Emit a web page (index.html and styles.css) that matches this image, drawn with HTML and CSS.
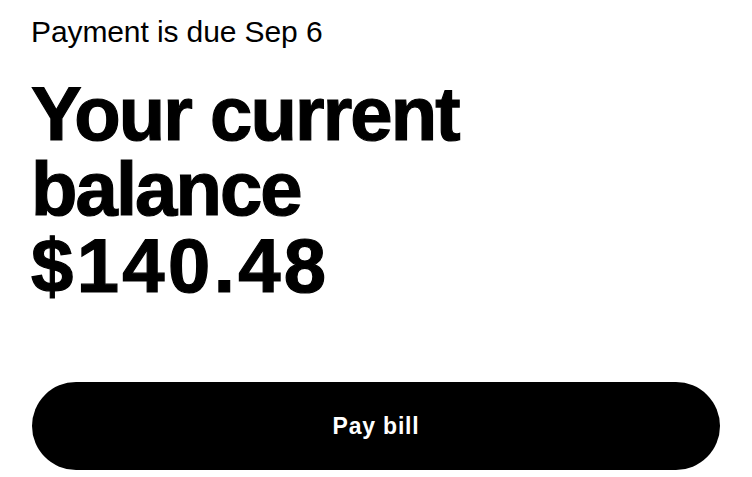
FILE: index.html
```html
<!DOCTYPE html>
<html lang="en">
<head>
<meta charset="utf-8">
<title>Balance</title>
<link rel="stylesheet" href="styles.css">
</head>
<body>
<main class="page">
  <p class="due">Payment is due Sep 6</p>
  <h1 class="title">Your current<br>balance<span class="amount">$140.48</span></h1>
  <button class="pay" type="button">Pay bill</button>
</main>
</body>
</html>
```

FILE: styles.css
```css
html, body {
  margin: 0;
  padding: 0;
  background: #ffffff;
}

.page {
  display: flex;
  flex-direction: column;
  padding: 15px 32px 0 31px;
  font-family: "Liberation Sans", Arial, sans-serif;
  color: #000000;
}

.due {
  margin: 0;
  font-size: 30px;
  line-height: 34px;
  font-weight: 400;
  letter-spacing: -0.1px;
}

.title {
  margin: 27px 0 0 0;
  font-size: 76px;
  line-height: 75px;
  font-weight: 700;
  letter-spacing: -1.9px;
  -webkit-text-stroke: 1.2px #000000;
}

.amount {
  display: block;
  line-height: 79px;
  letter-spacing: 3.4px;
}

.pay {
  margin-top: 77px;
  margin-left: 1px;
  height: 88px;
  border: none;
  border-radius: 44px;
  background: #000000;
  color: #ffffff;
  font-family: "Liberation Sans", Arial, sans-serif;
  font-size: 23px;
  font-weight: 700;
  letter-spacing: 0.8px;
  cursor: pointer;
}
```
